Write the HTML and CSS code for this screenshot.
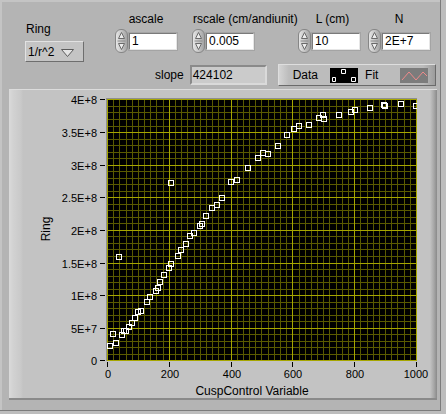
FILE: index.html
```html
<!DOCTYPE html>
<html lang="en">
<head>
    <meta charset="UTF-8">
    <title>Ring</title>
    <link rel="stylesheet" href="styles.css">
</head>
<body>
<div class="window">
    <div class="panel">
        <div class="top">
            <div class="ring-ctl">
                <div class="lbl">Ring</div>
                <div class="ring-box">
                    <span>1/r^2</span>
                    <svg class="ring-arrow" width="13" height="8" viewBox="0 0 13 8">
                        <path d="M0.5 0.5H12.5L6.5 7.5Z" fill="#e4e4e4" stroke="#5c5c5c"/>
                    </svg>
                </div>
            </div>
            <div class="right-side">
                <div class="nums">
                    <div class="num">
                        <div class="lbl">ascale</div>
                        <div class="num-body">
                            <div class="spin">
                                <svg width="11" height="22" viewBox="0 0 11 22">
                                    <path d="M5.5 2.5L8.5 8.5H2.5Z" fill="#ececec" stroke="#6a6a6a"/>
                                    <path d="M1.5 11H9.5" stroke="#8c8c8c"/>
                                    <path d="M5.5 19.5L8.5 13.5H2.5Z" fill="#ececec" stroke="#6a6a6a"/>
                                </svg>
                            </div>
                            <div class="field">1</div>
                        </div>
                    </div>
                    <div class="num num-rscale">
                        <div class="lbl">rscale (cm/andiunit)</div>
                        <div class="num-body">
                            <div class="spin">
                                <svg width="11" height="22" viewBox="0 0 11 22">
                                    <path d="M5.5 2.5L8.5 8.5H2.5Z" fill="#ececec" stroke="#6a6a6a"/>
                                    <path d="M1.5 11H9.5" stroke="#8c8c8c"/>
                                    <path d="M5.5 19.5L8.5 13.5H2.5Z" fill="#ececec" stroke="#6a6a6a"/>
                                </svg>
                            </div>
                            <div class="field">0.005</div>
                        </div>
                    </div>
                    <div class="num num-l">
                        <div class="lbl">L (cm)</div>
                        <div class="num-body">
                            <div class="spin">
                                <svg width="11" height="22" viewBox="0 0 11 22">
                                    <path d="M5.5 2.5L8.5 8.5H2.5Z" fill="#ececec" stroke="#6a6a6a"/>
                                    <path d="M1.5 11H9.5" stroke="#8c8c8c"/>
                                    <path d="M5.5 19.5L8.5 13.5H2.5Z" fill="#ececec" stroke="#6a6a6a"/>
                                </svg>
                            </div>
                            <div class="field">10</div>
                        </div>
                    </div>
                    <div class="num num-n">
                        <div class="lbl">N</div>
                        <div class="num-body">
                            <div class="spin">
                                <svg width="11" height="22" viewBox="0 0 11 22">
                                    <path d="M5.5 2.5L8.5 8.5H2.5Z" fill="#ececec" stroke="#6a6a6a"/>
                                    <path d="M1.5 11H9.5" stroke="#8c8c8c"/>
                                    <path d="M5.5 19.5L8.5 13.5H2.5Z" fill="#ececec" stroke="#6a6a6a"/>
                                </svg>
                            </div>
                            <div class="field">2E+7</div>
                        </div>
                    </div>
                </div>
                <div class="ind-row">
                    <span class="lbl slope-lbl">slope</span>
                    <div class="ind">424102</div>
                    <div class="legend">
                        <span class="leg-name">Data</span>
                        <svg class="swatch" width="28" height="15" viewBox="0 0 28 15">
                            <rect width="28" height="15" fill="#000"/>
                            <path d="M11.5 1.5h4v4h-4zM2.5 9.5h3v4h-3zM21.5 9.5h4v4h-4z" fill="none" stroke="#fff"/>
                        </svg>
                        <span class="leg-name leg-fit">Fit</span>
                        <svg class="swatch swatch-fit" width="28" height="15" viewBox="0 0 28 15">
                            <rect width="28" height="15" fill="#7c7c7c"/>
                            <path d="M2 12L9 4L16 12L23 4L27 8" fill="none" stroke="#ef8a8a"/>
                        </svg>
                    </div>
                </div>
            </div>
        </div>

        <div class="graph">
            <svg class="chart" width="428" height="311" viewBox="9 89 428 311">
                <defs>
                    <clipPath id="plotclip">
                        <rect x="107" y="99" width="310" height="262"/>
                    </clipPath>
                </defs>
                <!-- plot area -->
                <rect x="107" y="99" width="310" height="262" fill="#000"/>
                <path d="M106.5 98V361M106 98.5H417" stroke="#8e8e8e"/>
                <!-- minor grid -->
                <path stroke="#5a5a00" d="M113.5 99V361M119.5 99V361M126.5 99V361M132.5 99V361M138.5 99V361M144.5 99V361M150.5 99V361M156.5 99V361M163.5 99V361
                    M175.5 99V361M181.5 99V361M187.5 99V361M194.5 99V361M200.5 99V361M206.5 99V361M212.5 99V361M218.5 99V361M224.5 99V361
                    M237.5 99V361M243.5 99V361M249.5 99V361M255.5 99V361M261.5 99V361M268.5 99V361M274.5 99V361M280.5 99V361M286.5 99V361
                    M299.5 99V361M305.5 99V361M311.5 99V361M317.5 99V361M323.5 99V361M329.5 99V361M336.5 99V361M342.5 99V361M348.5 99V361
                    M360.5 99V361M367.5 99V361M373.5 99V361M379.5 99V361M385.5 99V361M391.5 99V361M397.5 99V361M404.5 99V361M410.5 99V361
                    M107 106.5H417M107 112.5H417M107 119.5H417M107 126.5H417
                    M107 139.5H417M107 145.5H417M107 152.5H417M107 158.5H417
                    M107 171.5H417M107 178.5H417M107 184.5H417M107 191.5H417
                    M107 204.5H417M107 210.5H417M107 217.5H417M107 223.5H417
                    M107 236.5H417M107 243.5H417M107 249.5H417M107 256.5H417
                    M107 269.5H417M107 276.5H417M107 282.5H417M107 289.5H417
                    M107 302.5H417M107 308.5H417M107 315.5H417M107 321.5H417
                    M107 334.5H417M107 341.5H417M107 347.5H417M107 354.5H417"/>
                <!-- major grid -->
                <path stroke="#a6a600" d="M107.5 99V361M169.5 99V361M231.5 99V361M292.5 99V361M354.5 99V361M416.5 99V361
                    M107 99.5H417M107 132.5H417M107 165.5H417M107 197.5H417M107 230.5H417M107 263.5H417M107 295.5H417M107 328.5H417M107 360.5H417"/>
                <!-- data -->
                <path clip-path="url(#plotclip)" fill="none" stroke="#fff" d="
                    M168.5 180.5h5v5h-5zM228.5 179.5h5v5h-5zM234.5 177.5h5v5h-5zM219.5 195.5h5v5h-5zM214.5 202.5h5v5h-5z
                    M209.5 205.5h5v5h-5zM203.5 213.5h5v5h-5zM199.5 221.5h5v5h-5zM197.5 223.5h5v5h-5zM191.5 230.5h5v5h-5z
                    M187.5 233.5h5v5h-5zM183.5 241.5h5v5h-5zM178.5 247.5h5v5h-5zM175.5 253.5h5v5h-5zM116.5 254.5h5v5h-5z
                    M168.5 261.5h5v5h-5zM166.5 265.5h5v5h-5zM161.5 272.5h5v5h-5zM157.5 279.5h5v5h-5zM155.5 285.5h5v5h-5z
                    M153.5 288.5h5v5h-5zM147.5 294.5h5v5h-5zM144.5 299.5h5v5h-5zM138.5 308.5h5v5h-5zM135.5 309.5h5v5h-5z
                    M132.5 315.5h5v5h-5zM129.5 320.5h5v5h-5zM126.5 324.5h5v5h-5zM123.5 328.5h5v5h-5zM121.5 328.5h5v5h-5z
                    M119.5 332.5h5v5h-5zM110.5 331.5h5v5h-5zM113.5 340.5h5v5h-5zM107.5 343.5h5v5h-5z
                    M245.5 165.5h5v5h-5zM255.5 155.5h5v5h-5zM260.5 150.5h5v5h-5zM265.5 151.5h5v5h-5zM275.5 143.5h5v5h-5z
                    M284.5 132.5h5v5h-5zM291.5 126.5h5v5h-5zM296.5 123.5h5v5h-5zM306.5 122.5h5v5h-5zM316.5 115.5h5v5h-5z
                    M320.5 112.5h5v5h-5zM321.5 116.5h5v5h-5zM336.5 112.5h5v5h-5zM348.5 109.5h5v5h-5zM352.5 107.5h5v5h-5z
                    M367.5 105.5h5v5h-5zM381.5 102.5h5v5h-5zM382.5 103.5h5v5h-5zM398.5 101.5h5v5h-5zM413.5 103.5h5v5h-5z"/>
                <!-- y axis -->
                <path stroke="#000" d="M100 99.5h5M100 132.5h5M100 165.5h5M100 197.5h5M100 230.5h5M100 263.5h5M100 295.5h5M100 328.5h5M100 360.5h5"/>
                <g class="tick-lbl" text-anchor="end">
                    <text x="97" y="104">4E+8</text>
                    <text x="97" y="137">3.5E+8</text>
                    <text x="97" y="170">3E+8</text>
                    <text x="97" y="202">2.5E+8</text>
                    <text x="97" y="235">2E+8</text>
                    <text x="97" y="268">1.5E+8</text>
                    <text x="97" y="300">1E+8</text>
                    <text x="97" y="333">5E+7</text>
                    <text x="97" y="365">0</text>
                </g>
                <!-- x axis -->
                <path stroke="#000" d="M107.5 362v5M169.5 362v5M231.5 362v5M292.5 362v5M354.5 362v5M416.5 362v5"/>
                <g class="tick-lbl" text-anchor="middle">
                    <text x="108" y="378">0</text>
                    <text x="170" y="378">200</text>
                    <text x="232" y="378">400</text>
                    <text x="293" y="378">600</text>
                    <text x="355" y="378">800</text>
                    <text x="416" y="378">1000</text>
                </g>
                <text class="axis-title" x="252" y="395" text-anchor="middle">CuspControl Variable</text>
                <text class="axis-title" transform="translate(50 229) rotate(-90)" text-anchor="middle">Ring</text>
            </svg>
        </div>
    </div>
</div>
</body>
</html>
```

FILE: styles.css
```css
* {
    box-sizing: border-box;
}

body {
    margin: 0;
    background-color: #bdbdbd;
    font-family: "Liberation Sans", Arial, sans-serif;
    font-size: 12px;
    color: #000;
}

.window {
    width: 446px;
    height: 414px;
    background-color: #bdbdbd;
    overflow: hidden;
}

.panel {
    width: 441px;
    height: 411px;
    background-color: #b4b4b4;
    border-right: 1px solid #7c7c7c;
    border-bottom: 1px solid #7c7c7c;
    box-shadow: inset 2px 2px 0 #c4c4c4;
}

.lbl {
    line-height: 14px;
    white-space: nowrap;
}

/* top controls */
.top {
    display: flex;
    height: 89px;
}

.ring-ctl {
    margin-left: 25px;
    padding-top: 22px;
}

.ring-ctl .lbl {
    padding-left: 1px;
}

.ring-box {
    display: flex;
    align-items: center;
    width: 59px;
    height: 21px;
    margin-top: 5px;
    padding-left: 2px;
    background-color: #c4c4c4;
    border: 1px solid;
    border-color: #e2e2e2 #6e6e6e #6e6e6e #e2e2e2;
}

.ring-arrow {
    margin-left: 7px;
    margin-top: 2px;
}

.right-side {
    margin-left: 31px;
}

.nums {
    display: flex;
    padding-top: 12px;
}

.num {
    width: 62px;
}

.num .lbl {
    text-align: center;
}

.num-rscale {
    margin-left: 15px;
}

.num-rscale .lbl {
    text-align: left;
    padding-left: 1px;
}

.num-l {
    margin-left: 44px;
}

.num-l .lbl {
    padding-left: 7px;
}

.num-n {
    margin-left: 8px;
}

.num-body {
    display: flex;
    align-items: center;
    height: 24px;
    margin-top: 3px;
}

.spin {
    width: 13px;
    height: 24px;
    border: 1px solid #868686;
    border-radius: 6px;
    background: linear-gradient(to right, #e6e6e6, #b8b8b8 70%, #a4a4a4);
}

.spin svg {
    display: block;
}

.field {
    width: 48px;
    height: 17px;
    margin-left: 1px;
    padding-left: 2px;
    line-height: 14px;
    background-color: #fff;
    border: 1px solid;
    border-color: #7a7a7a #e6e6e6 #e6e6e6 #7a7a7a;
    box-shadow: 0 0 0 1px #a4a4a4;
}

.ind-row {
    display: flex;
    align-items: center;
    height: 22px;
    margin-top: 11px;
}

.slope-lbl {
    margin-left: 40px;
}

.ind {
    width: 77px;
    height: 20px;
    margin-left: 6px;
    padding-left: 1px;
    line-height: 16px;
    background-color: #cbcbcb;
    border: 2px solid;
    border-color: #8a8a8a #dadada #dadada #8a8a8a;
}

.legend {
    display: flex;
    align-items: center;
    width: 158px;
    height: 22px;
    margin-left: 11px;
    border: 1px solid;
    border-color: #dedede #6a6a6a #6a6a6a #dedede;
    background: linear-gradient(to right, #d4d4d4, #bcbcbc 10px, #bcbcbc calc(100% - 12px), #9c9c9c);
}

.leg-name {
    margin-left: 14px;
}

.leg-fit {
    margin-left: 7px;
}

.swatch {
    display: block;
    margin-left: 12px;
}

.swatch-fit {
    margin-left: 22px;
}

/* graph */
.graph {
    width: 428px;
    height: 311px;
    margin-left: 9px;
    border-top: 1px solid #dcdcdc;
    border-bottom: 2px solid #8a8a8a;
    background: linear-gradient(to right, #dadada 0, #d2d2d2 4px, #c9c9c9 12px, #c3c3c3 14px, #c3c3c3 calc(100% - 7px), #a6a6a6 calc(100% - 3px), #8a8a8a 100%);
}

.chart {
    display: block;
    margin-top: -1px;
    shape-rendering: crispEdges;
}

.chart text {
    shape-rendering: auto;
}

.tick-lbl {
    font-size: 11px;
}

.axis-title {
    font-size: 12px;
}
```
